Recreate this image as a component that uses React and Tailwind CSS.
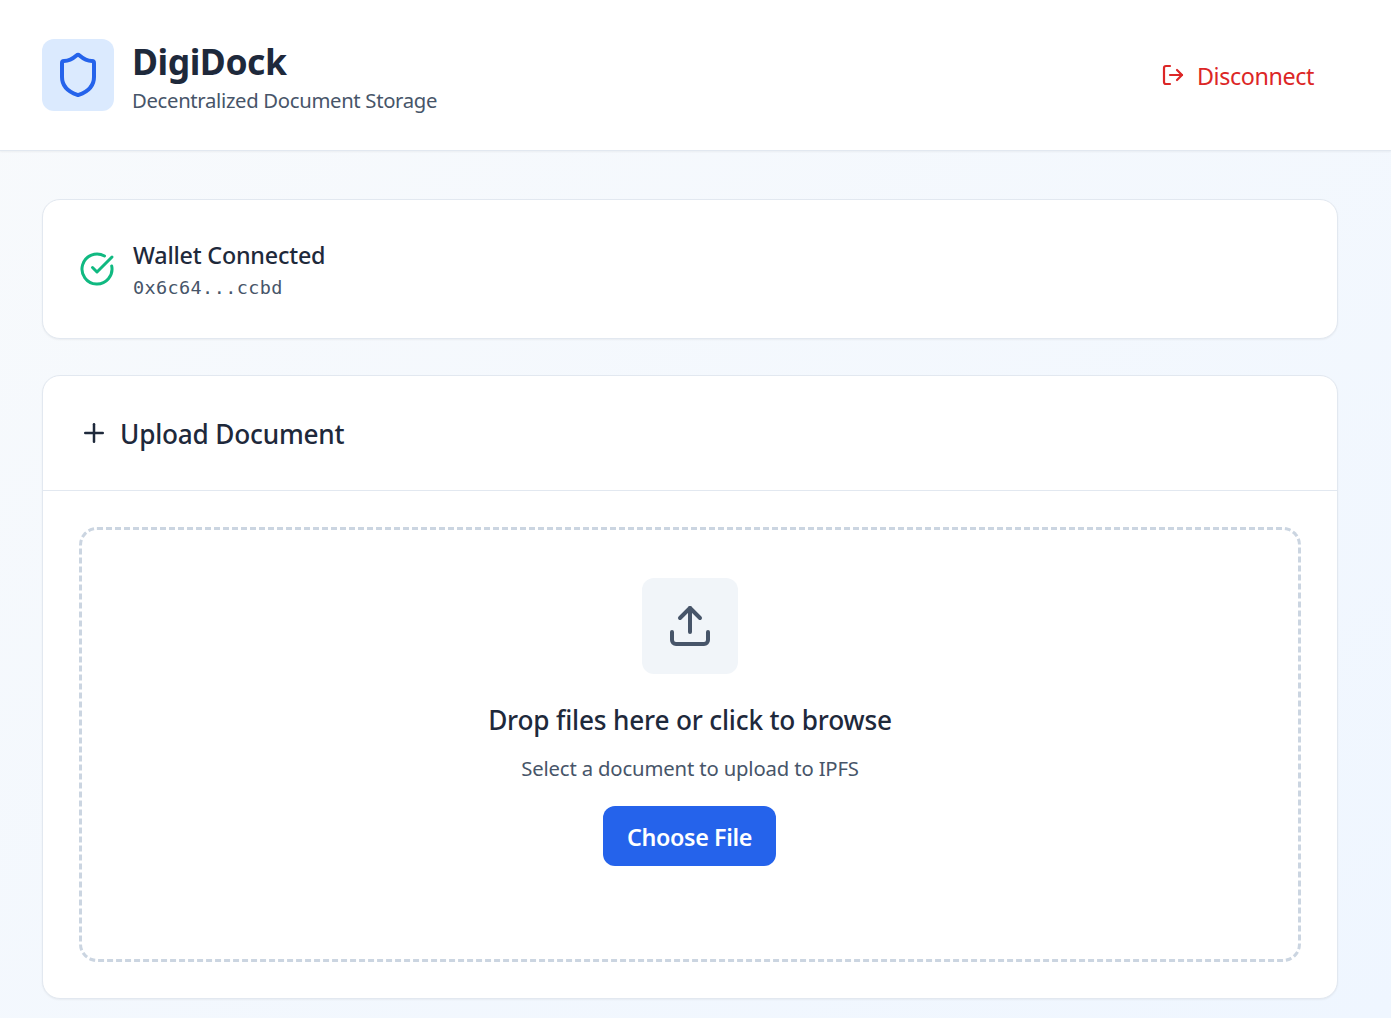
import { CircleCheckBig, LogOut, Plus, Shield, Upload } from "lucide-react";

function Header() {
  return (
    <header className="h-[151px] border-b border-slate-200 bg-white pr-[53px] pl-[42px] shadow-[0_1px_2px_0_rgba(0,0,0,0.05)]">
      <div className="flex h-[150px] items-center justify-between">
        <div className="flex items-center gap-[18px]">
          <div className="flex size-[72px] items-center justify-center rounded-xl bg-[#dbeafe]">
            <Shield className="size-12 text-[#2563eb]" />
          </div>
          <div className="flex flex-col pt-0.5">
            <h1 className="h-12 text-[35.5px] leading-[48px] font-bold tracking-[-0.45px] text-[#1e293b]">DigiDock</h1>
            <p className="h-[30px] text-[20.3px] leading-[30px] tracking-[-0.32px] text-[#475569]">
              Decentralized Document Storage
            </p>
          </div>
        </div>
        <button className="flex items-center gap-3 pr-6 text-[23.3px] leading-9 tracking-[-0.4px] text-[#dc2626]">
          <LogOut className="size-6" strokeWidth={2.2} />
          <span className="pt-0.5">Disconnect</span>
        </button>
      </div>
    </header>
  );
}

function WalletCard() {
  return (
    <section className="flex h-[140px] items-center gap-[18px] rounded-[18px] border border-slate-200 bg-white px-9 shadow-[0_1px_2px_0_rgba(0,0,0,0.05)]">
      <CircleCheckBig className="size-9 text-[#10b981]" />
      <div className="pt-0.5">
        <p className="text-[23.3px] leading-9 font-medium tracking-[-0.2px] text-[#1e293b]">Wallet Connected</p>
        <p className="font-['DejaVu_Sans_Mono',monospace] text-[18.5px] leading-[30px] tracking-[0.38px] text-[#475569]">
          0x6c64...ccbd
        </p>
      </div>
    </section>
  );
}

function UploadCard() {
  return (
    <section className="h-[624px] rounded-[18px] border border-slate-200 bg-white shadow-[0_1px_2px_0_rgba(0,0,0,0.05)]">
      <div className="flex h-[115px] items-center gap-[11px] border-b border-slate-200 px-9">
        <Plus className="size-[30px] text-[#1e293b]" />
        <h2 className="pt-0.5 text-[26.2px] leading-[42px] font-medium tracking-[-0.2px] text-[#1e293b]">Upload Document</h2>
      </div>
      <div className="p-9">
        <div className="flex h-[435px] flex-col items-center rounded-[18px] border-3 border-dashed border-[#cbd5e1] pt-12">
          <div className="flex size-24 items-center justify-center rounded-xl bg-[#f1f5f9]">
            <Upload className="size-12 text-[#475569]" />
          </div>
          <h3 className="mt-[25px] text-[26.2px] leading-[42px] font-medium tracking-[-0.18px] text-[#1e293b]">
            Drop files here or click to browse
          </h3>
          <p className="mt-3 text-[20.3px] leading-[30px] tracking-[-0.15px] text-[#475569]">
            Select a document to upload to IPFS
          </p>
          <button className="mt-[23px] mr-px h-[60px] w-[173px] rounded-xl bg-[#2563eb] pt-0.5 text-[23.3px] leading-9 font-semibold tracking-[-0.35px] text-white">
            Choose File
          </button>
        </div>
      </div>
    </section>
  );
}

export default function App() {
  return (
    <div className="h-[1018px] overflow-hidden bg-linear-to-br from-[#f8fafc] to-[#eff6ff] font-['Noto_Sans',sans-serif]">
      <Header />
      <main className="flex flex-col gap-9 pt-12 pr-[53px] pl-[42px]">
        <WalletCard />
        <UploadCard />
      </main>
    </div>
  );
}
